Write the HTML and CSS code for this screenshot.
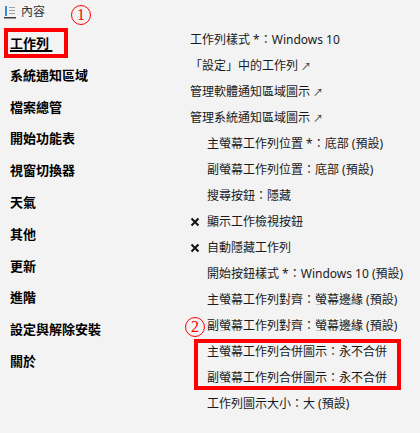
FILE: index.html
```html
<!DOCTYPE html>
<html lang="zh-Hant">
<head>
<meta charset="utf-8">
<title>內容</title>
<link rel="stylesheet" href="styles.css">
</head>
<body>
<header class="top">
  <svg class="top-icon" width="12" height="14" viewBox="0 0 12 14">
    <rect x="1" y="1" width="2" height="10" fill="#3d86d8"/>
    <rect x="5" y="2" width="6" height="1" fill="#9aa3ad"/>
    <rect x="5" y="5" width="6" height="1" fill="#9aa3ad"/>
    <rect x="5" y="8" width="6" height="1" fill="#9aa3ad"/>
    <rect x="0" y="12" width="12" height="1.5" fill="#3a3f47"/>
  </svg>
  <span class="top-title">內容</span>
  <span class="mark mark-1">1</span>
</header>
<div class="layout">
  <nav class="nav">
    <div class="nav-item current"><span class="nav-link">工作列&nbsp;</span></div>
    <div class="nav-item">系統通知區域</div>
    <div class="nav-item">檔案總管</div>
    <div class="nav-item">開始功能表</div>
    <div class="nav-item">視窗切換器</div>
    <div class="nav-item">天氣</div>
    <div class="nav-item">其他</div>
    <div class="nav-item">更新</div>
    <div class="nav-item">進階</div>
    <div class="nav-item">設定與解除安裝</div>
    <div class="nav-item">關於</div>
  </nav>
  <main class="props">
    <div class="row">工作列樣式 *：Windows 10</div>
    <div class="row">「設定」中的工作列 <span class="ext">↗</span></div>
    <div class="row">管理軟體通知區域圖示 <span class="ext">↗</span></div>
    <div class="row">管理系統通知區域圖示 <span class="ext">↗</span></div>
    <div class="row sub">主螢幕工作列位置 *：底部 (預設)</div>
    <div class="row sub">副螢幕工作列位置：底部 (預設)</div>
    <div class="row sub">搜尋按鈕：隱藏</div>
    <div class="row check"><svg class="x" width="10" height="10" viewBox="0 0 10 10"><path d="M1.5 1.5 L8.5 8.5 M8.5 1.5 L1.5 8.5" stroke="#111" stroke-width="2" fill="none"/></svg>顯示工作檢視按鈕</div>
    <div class="row check"><svg class="x" width="10" height="10" viewBox="0 0 10 10"><path d="M1.5 1.5 L8.5 8.5 M8.5 1.5 L1.5 8.5" stroke="#111" stroke-width="2" fill="none"/></svg>自動隱藏工作列</div>
    <div class="row sub">開始按鈕樣式 *：Windows 10 (預設)</div>
    <div class="row sub">主螢幕工作列對齊：螢幕邊緣 (預設)</div>
    <div class="row sub marked"><span class="mark mark-2">2</span>副螢幕工作列對齊：螢幕邊緣 (預設)</div>
    <div class="boxed">
      <div class="row sub">主螢幕工作列合併圖示：永不合併</div>
      <div class="row sub">副螢幕工作列合併圖示：永不合併</div>
    </div>
    <div class="row sub">工作列圖示大小：大 (預設)</div>
  </main>
</div>
</body>
</html>
```

FILE: styles.css
```css
html, body {
  margin: 0;
  padding: 0;
}

body {
  width: 420px;
  height: 433px;
  overflow: hidden;
  background: #f3f3f3;
  color: #1a1a1a;
  font-family: "Segoe UI", "Noto Sans", "Noto Sans CJK TC", sans-serif;
}

.top {
  position: relative;
  box-sizing: border-box;
  height: 27px;
  padding: 4px 0 0 4px;
  display: flex;
  align-items: flex-start;
  gap: 5px;
}

.top-icon {
  display: block;
  margin-top: 1px;
}

.top-title {
  font-size: 12px;
  line-height: 16px;
  color: #333;
}

.mark {
  position: absolute;
  box-sizing: border-box;
  width: 20px;
  height: 20px;
  border: 1.5px solid #f00;
  border-radius: 50%;
  color: #f00;
  font-family: "Liberation Serif", serif;
  font-size: 16px;
  line-height: 17px;
  text-align: center;
}

.mark-1 {
  left: 71px;
  top: 5px;
}

.layout {
  display: flex;
}

.nav {
  width: 190px;
  flex: none;
  padding-top: 1px;
}

.nav-item {
  height: 31.8px;
  line-height: 31.8px;
  padding-left: 10px;
  font-size: 13px;
  font-weight: bold;
  color: #000;
  white-space: nowrap;
}

.nav-item.current {
  position: relative;
}

.nav-item.current::after {
  content: "";
  position: absolute;
  left: 4px;
  top: 0;
  width: 64px;
  height: 30px;
  box-sizing: border-box;
  border: 4px solid #f00;
}

.nav-link {
  text-decoration: underline;
  text-decoration-thickness: 1.5px;
  text-underline-offset: 2px;
}

.props {
  flex: 1;
}

.row {
  height: 26px;
  line-height: 26px;
  font-size: 12px;
  white-space: nowrap;
  display: flex;
  align-items: center;
}

.row.sub {
  padding-left: 17px;
}

.row.check .x {
  margin-right: 7px;
  flex: none;
}

.ext {
  font-size: 10px;
  margin-left: 3px;
  color: #333;
}

.marked {
  position: relative;
}

.mark-2 {
  left: -5px;
  top: 4px;
}

.boxed {
  position: relative;
}

.boxed::after {
  content: "";
  position: absolute;
  left: 4px;
  top: 0;
  width: 207px;
  height: 51px;
  box-sizing: border-box;
  border: 4px solid #f00;
}
```
